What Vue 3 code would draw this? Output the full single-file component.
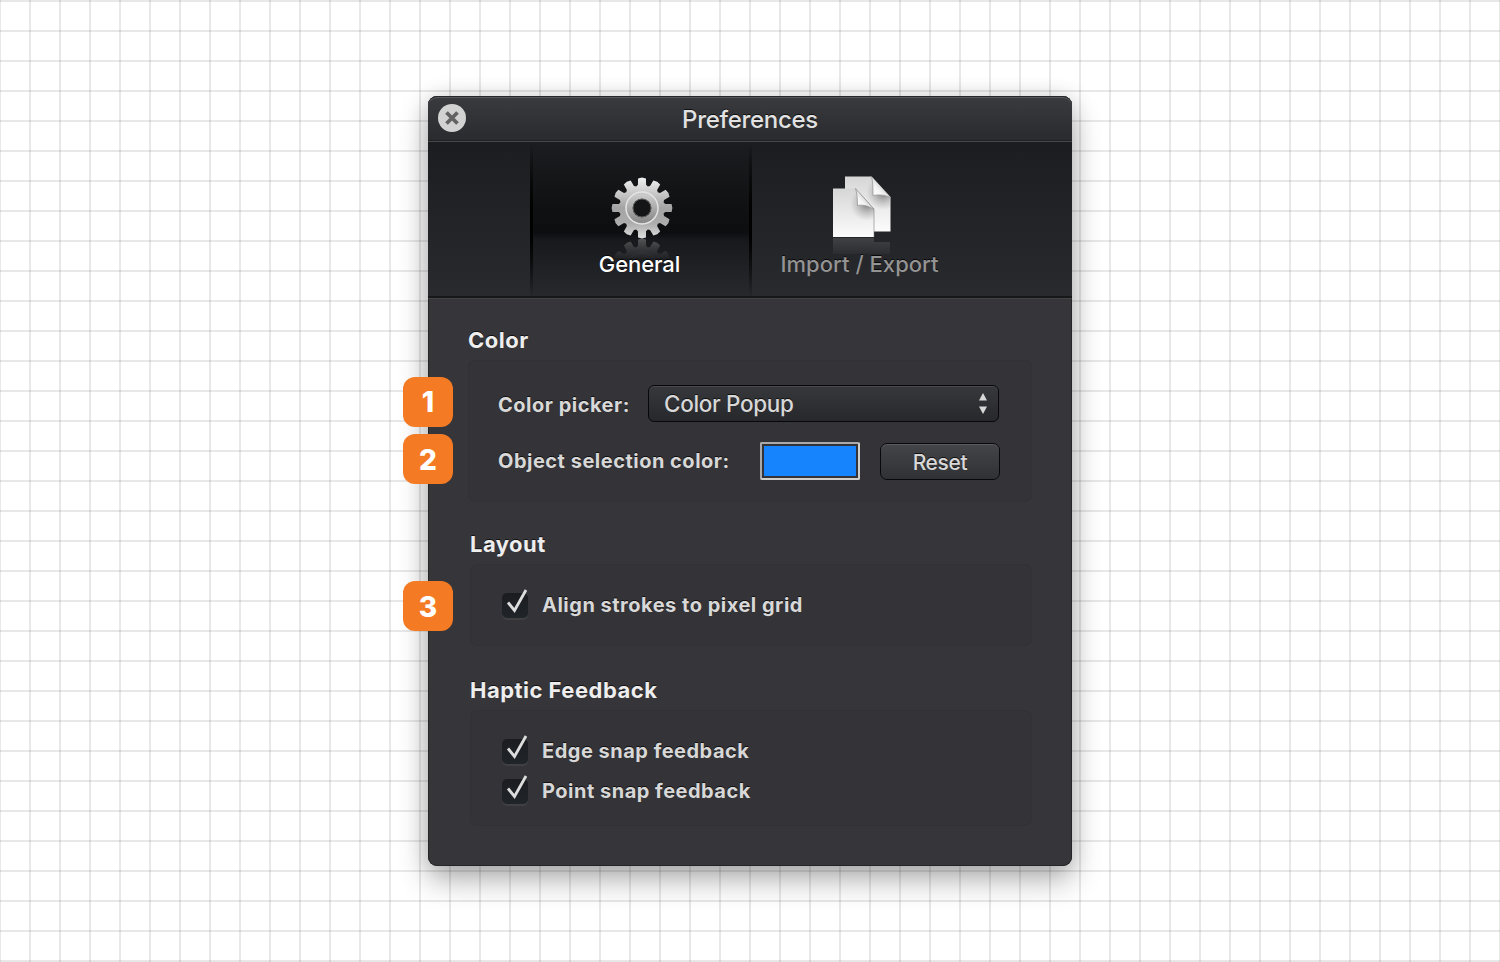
<script setup>
const point = (r, deg) => {
  const a = (deg * Math.PI) / 180
  return `${(32 + r * Math.sin(a)).toFixed(2)} ${(32 - r * Math.cos(a)).toFixed(2)}`
}

const teeth = []
for (let i = 0; i < 12; i++) {
  const c = i * 30
  teeth.push(point(23.5, c - 10), point(29.8, c - 7.6), point(30.4, c), point(29.8, c + 7.6), point(23.5, c + 10), point(22.3, c + 15))
}
const gearPath = `M${teeth.join('L')}Z M41.5 32A9.5 9.5 0 1 0 22.5 32A9.5 9.5 0 1 0 41.5 32Z`

const haptics = [
  { label: 'Edge snap feedback', cls: 'edge' },
  { label: 'Point snap feedback', cls: 'point' },
]
</script>

<template>
  <main class="stage">
    <section class="window">
      <header class="titlebar">
        <button class="close" aria-label="Close">
          <svg viewBox="0 0 28 28"><path d="M8.500 8.500L19.500 19.500M19.500 8.500L8.500 19.500" /></svg>
        </button>
        <h1><span class="t-title">Preferences</span></h1>
      </header>

      <nav class="tabs">
        <div class="tab selected">
          <svg class="icon" width="64" height="90" viewBox="0 0 64 90">
            <defs>
              <linearGradient id="metal" x1="0" y1="0" x2="0" y2="1">
                <stop offset="0" stop-color="#f0f0f0" />
                <stop offset=".5" stop-color="#a4a4a4" />
                <stop offset=".75" stop-color="#acacac" />
                <stop offset="1" stop-color="#dedede" />
              </linearGradient>
              <linearGradient id="ring" x1="0" y1="0" x2="0" y2="1">
                <stop offset="0" stop-color="#c9c9c9" />
                <stop offset="1" stop-color="#8c8c8c" />
              </linearGradient>
              <linearGradient id="fade" x1="0" y1="0" x2="0" y2="1">
                <stop offset="0" stop-color="#fff" stop-opacity=".32" />
                <stop offset="1" stop-color="#fff" stop-opacity=".05" />
              </linearGradient>
              <mask id="gearMask"><rect y="62" width="64" height="20" fill="url(#fade)" /></mask>
            </defs>
            <g mask="url(#gearMask)">
              <g transform="translate(0 125) scale(1 -1)">
                <path :d="gearPath" fill="url(#metal)" fill-rule="evenodd" />
                <circle cx="32" cy="32" r="16" fill="none" stroke="#ddd" stroke-width="1.5" />
              </g>
            </g>
            <path :d="gearPath" fill="url(#metal)" fill-rule="evenodd" />
            <circle cx="32" cy="32" r="12.5" fill="none" stroke="url(#ring)" stroke-width="6" />
            <circle cx="32" cy="32" r="16" fill="none" stroke="#e4e4e4" stroke-width="1.5" />
            <circle cx="32" cy="32" r="9" fill="#141517" stroke="#636363" stroke-width="1" />
          </svg>
          <span class="t-general">General</span>
        </div>
        <div class="tab">
          <svg class="icon docs" width="64" height="90" viewBox="0 0 64 90">
            <defs>
              <linearGradient id="paper" x1="0" y1="0" x2="0" y2="1">
                <stop offset="0" stop-color="#d6d6d6" />
                <stop offset="1" stop-color="#fcfcfc" />
              </linearGradient>
              <radialGradient id="shadeBack" gradientUnits="userSpaceOnUse" cx="53" cy="17" r="17">
                <stop offset="0" stop-color="#666" stop-opacity=".8" />
                <stop offset="1" stop-color="#999" stop-opacity="0" />
              </radialGradient>
              <radialGradient id="shadeFront" gradientUnits="userSpaceOnUse" cx="37" cy="28" r="17">
                <stop offset="0" stop-color="#666" stop-opacity=".8" />
                <stop offset="1" stop-color="#999" stop-opacity="0" />
              </radialGradient>
              <linearGradient id="fold" x1="0" y1="1" x2="1" y2="0">
                <stop offset="0" stop-color="#fff" />
                <stop offset=".35" stop-color="#f6f6f6" />
                <stop offset=".6" stop-color="#cfcfcf" />
              </linearGradient>
              <linearGradient id="mirror" x1="0" y1="0" x2="0" y2="1">
                <stop offset="0" stop-color="#fff" stop-opacity=".13" />
                <stop offset="1" stop-color="#fff" stop-opacity=".03" />
              </linearGradient>
            </defs>
            <path d="M15 .5H41.500L60.500 21V55.500H15Z" fill="url(#paper)" />
            <path d="M15 .5H41.500L60.500 21V55.500H15Z" fill="url(#shadeBack)" />
            <path d="M41.500 .5L60.500 21.500C54 18.500 48 18.500 43 19.500C43 12 43 6 41.500 .5Z" fill="url(#fold)" />
            <path d="M41.500 .5C43 6 43 12 43 19.500C48 18.500 54 18.500 60.500 21.500" fill="none" stroke="#888" stroke-opacity=".65" stroke-width="1" />
            <path d="M3 12.500H25.500L44 33V61H3Z" fill="url(#paper)" />
            <path d="M3 12.500H25.500L44 33V61H3Z" fill="url(#shadeFront)" />
            <path d="M25.500 12.500L44 33.500C38 29.500 33 28.500 27.500 29.500C27.500 22 27 17 25.500 12.500Z" fill="url(#fold)" />
            <path d="M25.500 12.500C27 17 27.500 22 27.500 29.500C33 28.500 38 29.500 44 33.500" fill="none" stroke="#888" stroke-opacity=".65" stroke-width="1" />
            <path d="M25.500 12.500L44 33V61" fill="none" stroke="#777" stroke-opacity=".55" stroke-width="1" />
            <path d="M3 62H44V78H3Z M44 66H60V78H44Z" fill="url(#mirror)" />
          </svg>
          <span class="t-import">Import / Export</span>
        </div>
      </nav>

      <div class="content">
        <h2 class="h-color"><span class="t-color">Color</span></h2>
        <div class="group g-color">
          <div class="row picker">
            <i class="badge">1</i>
            <span class="t-picker">Color picker:</span>
            <button class="select">
              <span class="t-popup">Color Popup</span>
              <svg width="10" height="22" viewBox="0 0 10 22"><path d="M5 0L9 7.500H1ZM5 21L9 13.500H1Z" /></svg>
            </button>
          </div>
          <div class="row selection">
            <i class="badge">2</i>
            <span class="t-object">Object selection color:</span>
            <span class="swatch"></span>
            <button class="reset"><span class="t-reset">Reset</span></button>
          </div>
        </div>

        <h2 class="h-layout"><span class="t-layout">Layout</span></h2>
        <div class="group g-layout">
          <div class="row check">
            <i class="badge">3</i>
            <span class="box"><svg width="26" height="30" viewBox="0 0 26 30"><path d="M6 16.500L12.500 24.500L24 4" /></svg></span>
            <span class="t-align">Align strokes to pixel grid</span>
          </div>
        </div>

        <h2 class="h-haptic"><span class="t-haptic">Haptic Feedback</span></h2>
        <div class="group g-haptic">
          <div v-for="item in haptics" :key="item.cls" class="row check">
            <span class="box"><svg width="26" height="30" viewBox="0 0 26 30"><path d="M6 16.500L12.500 24.500L24 4" /></svg></span>
            <span :class="`t-${item.cls}`">{{ item.label }}</span>
          </div>
        </div>
      </div>
    </section>
  </main>
</template>

<style>
body { margin: 0; }
</style>

<style scoped>
* { box-sizing: border-box; }
.stage {
  width: 1500px;
  height: 962px;
  display: flex;
  align-items: center;
  justify-content: center;
  background:
    repeating-linear-gradient(90deg, rgba(0,0,0,.09) 0 1px, transparent 1px 29px, rgba(0,0,0,.09) 29px 30px),
    repeating-linear-gradient(180deg, rgba(0,0,0,.09) 0 2px, transparent 2px 30px),
    #fff;
  font-family: Inter, "Liberation Sans", sans-serif;
  overflow: hidden;
}
.window {
  width: 644px;
  height: 770px;
  border-radius: 9px;
  background: #363539;
  box-shadow: 0 14px 30px rgba(0,0,0,.3), 0 0 22px rgba(0,0,0,.13), inset 0 0 0 1px #252528;
  color: #ddd;
}
button { font: inherit; padding: 0; border: 0; color: inherit; }
span { white-space: nowrap; }
.titlebar {
  height: 46px;
  display: grid;
  grid-template-columns: 48px 1fr 48px;
  align-items: center;
  border-radius: 9px 9px 0 0;
  background: linear-gradient(#3a3b3e, #292a2d);
  box-shadow: inset 0 1px #252629, inset 0 2px #58595b, inset 0 -1px #47484a, inset 0 -2px #202123;
}
.close { width: 28px; height: 28px; margin: -2px 0 0 10px; border-radius: 50%; background: #d2d2d2; }
.close svg { display: block; width: 28px; height: 28px; fill: none; stroke: #626262; stroke-width: 3.8; }
h1 { margin: 1px 0 0; text-align: center; font-size: 24px; line-height: 30px; font-weight: 450; letter-spacing: -.3px; color: #e2e2e2; text-shadow: 0 -1px #111; }
.tabs {
  height: 156px;
  display: flex;
  padding-left: 102px;
  background: linear-gradient(#1c1d20, #292a2e);
  box-shadow: inset 0 -2px #17181a, 0 1px #434346;
}
.tab { width: 216px; display: flex; flex-direction: column; align-items: center; padding-top: 34px; font-size: 22px; line-height: 28px; font-weight: 450; color: #949494; text-shadow: 0 -1px #080808; }
.tab.selected {
  width: 222px;
  color: #fff;
  font-weight: 500;
  background:
    linear-gradient(#17181a, #17181a) bottom / 100% 2px no-repeat,
    linear-gradient(transparent, #000 45%, #000 60%, transparent) left / 3px 100% no-repeat,
    linear-gradient(transparent, #000 45%, #000 60%, transparent) right / 3px 100% no-repeat,
    linear-gradient(#1c1d20, #101113 40%, #0d0e10 58%, #18191c 63%, #28292d);
}
.icon { display: block; margin-bottom: -16px; }
.docs { margin-left: 4px; }
.selected .icon { margin-left: 2px; }
.icon + span { position: relative; }
.t-general { margin-right: 3px; letter-spacing: -.1px; }
.t-import { margin-right: 1px; letter-spacing: .05px; }
.content { padding: 28px 40px 0; }
h2 { margin: 0; font-size: 22px; line-height: 28px; font-weight: 750; letter-spacing: .48px; color: #eee; text-shadow: 0 -1px #111; }
.h-layout, .h-haptic { padding-left: 2px; }
.h-layout { margin-top: 28px; }
.h-haptic { margin-top: 30px; }
.group { border-radius: 7px; background: #343337; border: 1px solid #323135; font-size: 20px; font-weight: 750; letter-spacing: .5px; color: #d8d8d8; }
.g-color { height: 142px; margin-top: 6px; padding: 24px 31px 0 29px; }
.g-layout { height: 82px; margin: 6px 0 0 2px; padding: 20px 0 0 31px; }
.g-haptic { height: 116px; margin: 6px 0 0 2px; padding: 20px 0 0 31px; }
.row { position: relative; display: flex; align-items: center; text-shadow: 0 -1px #111; }
.picker { height: 37px; justify-content: space-between; }
.t-picker { margin-top: 3px; }
.selection { height: 38px; margin-top: 20px; }
.badge {
  position: absolute;
  left: -95px;
  top: -8px;
  width: 50px;
  height: 50px;
  border-radius: 12px;
  background: #f47b24;
  color: #fff;
  text-align: center;
  font: 800 28px/50px Inter, sans-serif;
  letter-spacing: 0;
  text-shadow: none;
}
.selection .badge, .check .badge { line-height: 52px; }
.check .badge { left: -99px; top: -4px; }
.select {
  width: 351px;
  height: 37px;
  margin-right: 1px;
  display: flex;
  align-items: center;
  justify-content: space-between;
  padding: 0 10px 0 15px;
  border-radius: 6px;
  border: 1.5px solid #08080a;
  background: linear-gradient(#37383b, #27282b);
  box-shadow: inset 0 1px #48494c;
  text-shadow: 0 -1px #111;
  font-size: 22.5px;
  font-weight: 450;
  letter-spacing: -.33px;
  line-height: 30px;
}
.select svg { fill: #d8d8d8; }
.t-popup { margin-top: 1px; }
.t-object { margin-top: -1px; }
.swatch { width: 100px; height: 38px; margin-left: auto; border: 2px solid; border-color: #aaa #d2d0cc #d2d0cc #aaa; border-radius: 2px; padding: 2px; background: #1684fc content-box; }
.reset { width: 120px; height: 37px; margin-left: 20px; border-radius: 7px; border: 1.5px solid #08080a; background: linear-gradient(#444548, #303134); box-shadow: inset 0 1px #5a5b5d; font-size: 21px; font-weight: 450; letter-spacing: -.35px; line-height: 37px; text-shadow: 0 -1px #111; }
.check { height: 40px; }
.box { position: relative; width: 26px; height: 25px; margin: 1px 14px 0 0; border-radius: 5px; background: linear-gradient(#1b1c20, #20252a); box-shadow: 0 2px #404043; }
.box svg { position: absolute; left: 0; top: -7px; fill: none; stroke: #ddd; stroke-width: 2.8; }
</style>
